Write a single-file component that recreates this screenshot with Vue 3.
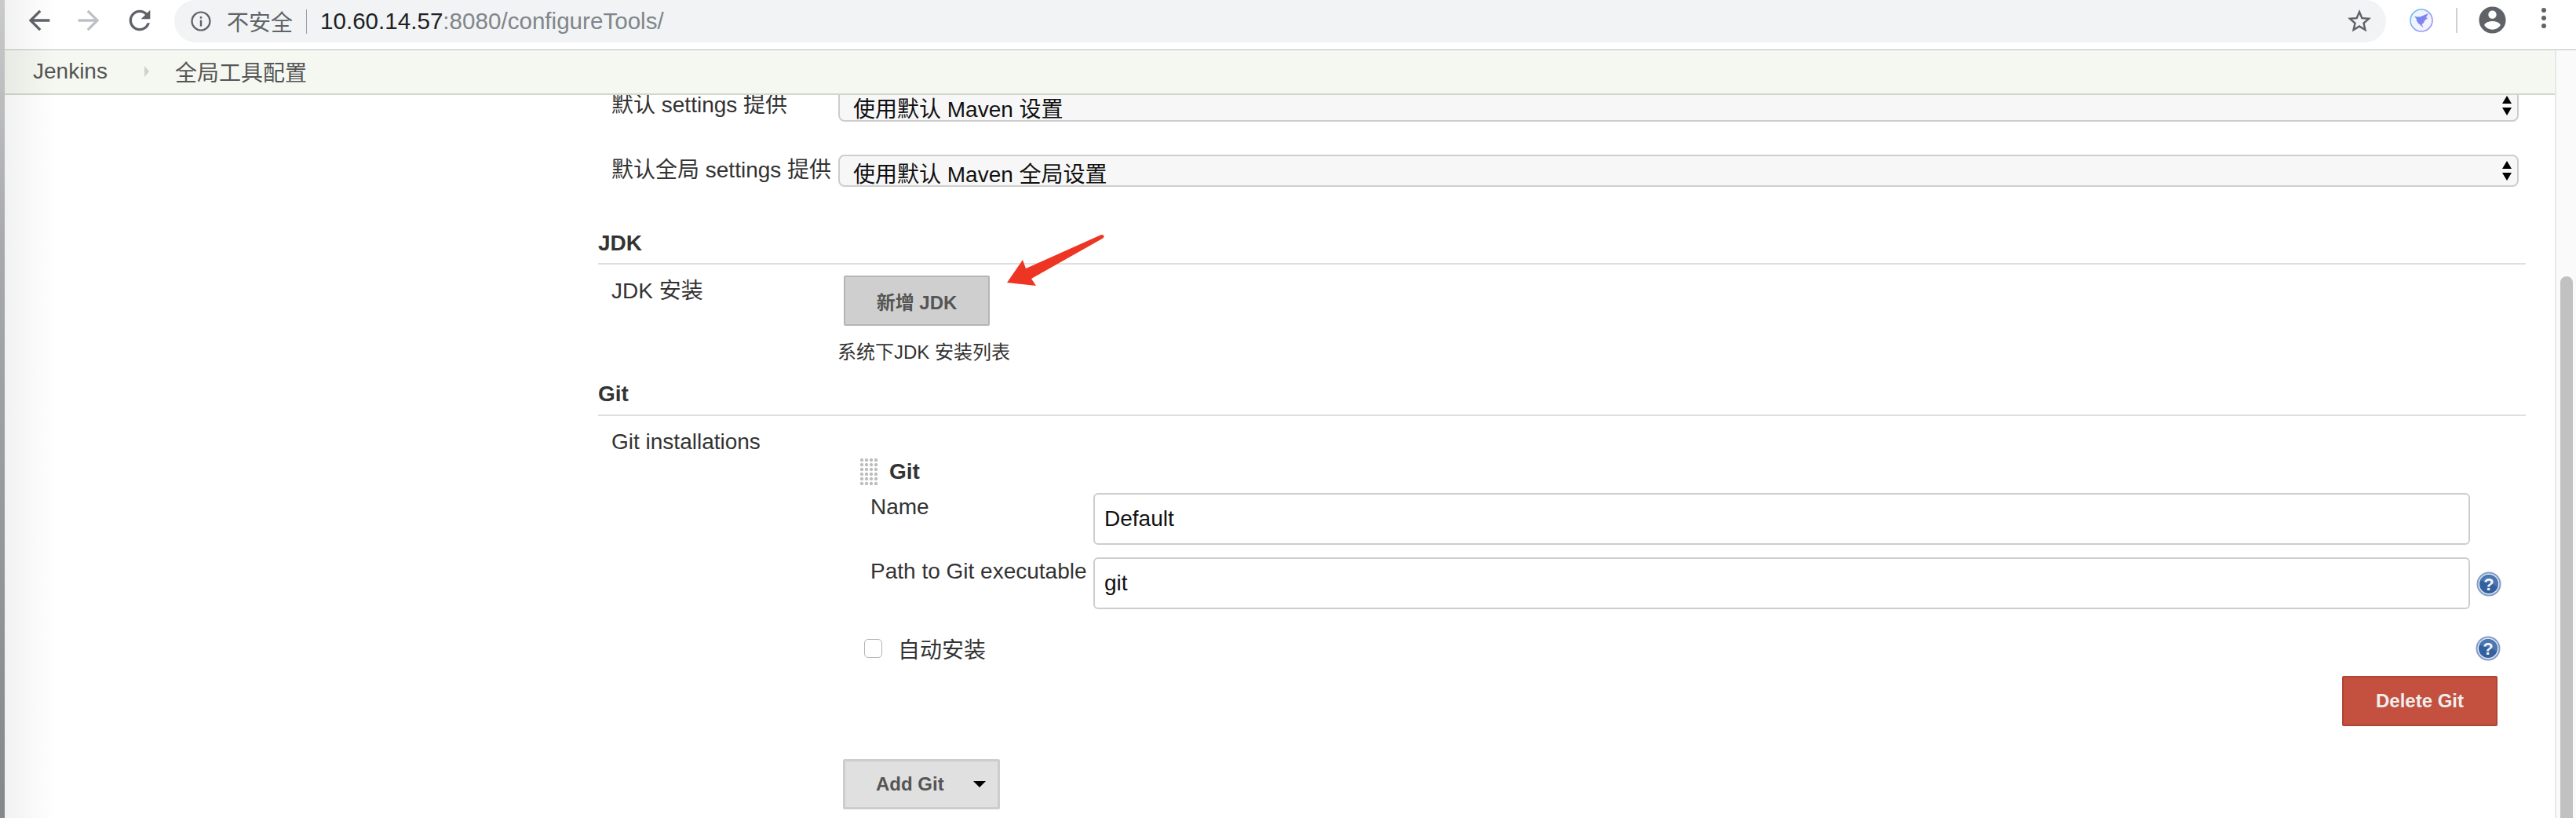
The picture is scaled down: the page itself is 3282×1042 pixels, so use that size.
<template>
  <div class="page">
    <div class="edge"></div>
    <div class="window">
      <div class="shade"></div>

      <header class="toolbar">
        <svg class="nav back" viewBox="0 0 24 24"><path d="M20 11H7.83l5.59-5.59L12 4l-8 8 8 8 1.41-1.41L7.83 13H20v-2z" /></svg>
        <svg class="nav forward" viewBox="0 0 24 24"><path d="M12 4l-1.41 1.41L16.17 11H4v2h12.17l-5.58 5.59L12 20l8-8z" /></svg>
        <svg class="nav reload" viewBox="0 0 24 24"><path d="M17.65 6.35A7.958 7.958 0 0 0 12 4c-4.42 0-7.99 3.58-7.99 8s3.57 8 7.99 8c3.73 0 6.84-2.55 7.73-6h-2.08A5.99 5.99 0 0 1 12 18c-3.31 0-6-2.69-6-6s2.69-6 6-6c1.66 0 3.14.69 4.22 1.78L13 11h7V4l-2.35 2.35z" /></svg>

        <div class="omnibox">
          <svg class="info" viewBox="0 0 26 26">
            <circle cx="13" cy="13" r="11.5" fill="none" stroke="#5f6368" stroke-width="2.2" />
            <rect x="11.8" y="11.5" width="2.4" height="8" fill="#5f6368" />
            <rect x="11.8" y="7" width="2.4" height="2.6" fill="#5f6368" />
          </svg>
          <span class="insecure">不安全</span>
          <span class="url-sep"></span>
          <span class="url"><b>10.60.14.57</b>:8080/configureTools/</span>
          <svg class="star" viewBox="0 0 24 24"><path d="M22 9.24l-7.19-.62L12 2 9.19 8.63 2 9.24l5.46 4.73L5.82 21 12 17.27 18.18 21l-1.63-7.03L22 9.24zM12 15.4l-3.76 2.27 1-4.28-3.32-2.88 4.38-.38L12 6.1l1.71 4.04 4.38.38-3.32 2.88 1 4.28L12 15.4z" /></svg>
        </div>

        <svg class="ext" viewBox="0 0 30 30">
          <defs>
            <linearGradient id="ring" x1="0" y1="0" x2="1" y2="1">
              <stop offset="0" stop-color="#5cc8f5" />
              <stop offset="1" stop-color="#a78bf5" />
            </linearGradient>
            <linearGradient id="bird" x1="0" y1="0" x2="1" y2="1">
              <stop offset="0" stop-color="#4f8df0" />
              <stop offset="1" stop-color="#b07cf0" />
            </linearGradient>
          </defs>
          <circle cx="15" cy="15" r="14" fill="#f1f3fe" stroke="url(#ring)" stroke-width="1.6" />
          <path d="M6 10l4 .5c2 .2 3 .2 4.5-.6L24 6l-3.2 5.6 2.7.2-4.3 3.4c-.8 2.600-1.800 3.800-3.700 4.600l2 4.700-4.500-4.200c-2.500-1.800-4.500-4.800-4.400-7.600z" fill="url(#bird)" />
        </svg>
        <span class="tool-sep"></span>
        <svg class="avatar" viewBox="0 0 24 24"><path d="M12 2C6.48 2 2 6.48 2 12s4.48 10 10 10 10-4.48 10-10S17.52 2 12 2zm0 3c1.660 0 3 1.340 3 3s-1.340 3-3 3-3-1.340-3-3 1.340-3 3-3zm0 14.200c-2.500 0-4.710-1.280-6-3.220.03-1.990 4-3.080 6-3.080 1.990 0 5.970 1.090 6 3.080-1.290 1.940-3.500 3.220-6 3.220z" /></svg>
        <div class="dots"><i></i><i></i><i></i></div>
      </header>

      <div class="viewport">
        <div class="column">
          <nav class="breadcrumb">
            <span>Jenkins</span>
            <span class="crumb-arrow"></span>
            <span>全局工具配置</span>
          </nav>

          <main class="form">
            <div class="select-row first">
              <label class="field-label">默认 settings 提供</label>
              <div class="select">
                <span>使用默认 Maven 设置</span>
                <span class="spinner"><i class="up"></i><i class="down"></i></span>
              </div>
            </div>
            <div class="select-row second">
              <label class="field-label">默认全局 settings 提供</label>
              <div class="select">
                <span>使用默认 Maven 全局设置</span>
                <span class="spinner"><i class="up"></i><i class="down"></i></span>
              </div>
            </div>

            <h2 class="section jdk">JDK</h2>
            <div class="install-row">
              <label class="field-label">JDK 安装</label>
              <div class="install-body">
                <button class="btn btn-pressed">新增 JDK</button>
                <p class="hint">系统下JDK 安装列表</p>
              </div>
            </div>

            <h2 class="section git">Git</h2>
            <div class="git-row">
              <label class="field-label">Git installations</label>
              <div class="git-body">
                <div class="git-head">
                  <span class="handle"></span>
                  <strong>Git</strong>
                </div>
                <div class="input-row name-row">
                  <label>Name</label>
                  <input class="text" value="Default" />
                </div>
                <div class="input-row path-row">
                  <label>Path to Git executable</label>
                  <input class="text" value="git" />
                  <span class="help">
                    <svg viewBox="0 0 32 32"><use href="#help-glyph" /></svg>
                  </span>
                </div>
                <div class="auto-row">
                  <span class="check"></span>
                  <span class="auto-label">自动安装</span>
                  <span class="help">
                    <svg viewBox="0 0 32 32">
                      <defs>
                        <g id="help-glyph">
                          <circle cx="16" cy="16" r="15.500" fill="#7f9cc6" />
                          <circle cx="16" cy="16" r="13.500" fill="#e3e9f3" />
                          <circle cx="16" cy="16" r="12" fill="#34609f" />
                          <path d="M16 4a12 12 0 0 1 11 16.500C22 15 12 13 5 11.500A12 12 0 0 1 16 4z" fill="#4c77b3" />
                          <text x="16" y="24" text-anchor="middle" class="help-mark">?</text>
                        </g>
                      </defs>
                      <use href="#help-glyph" />
                    </svg>
                  </span>
                </div>
                <div class="delete-row">
                  <button class="btn btn-delete">Delete Git</button>
                </div>
                <button class="btn btn-add">
                  <span>Add Git</span>
                  <i class="caret"></i>
                </button>
              </div>
            </div>
          </main>
        </div>

        <div class="scrollbar"><div class="thumb"></div></div>
      </div>

      <!-- annotation drawn on top of the screenshot -->
      <svg class="annotation" viewBox="0 0 130 70">
        <path d="M122 1.500c2-1.200 4.500-.3 4.500 1.500 0 1-.7 2-1.700 2.800L34 57l6 9-37-4L23 33l4 11z" fill="#ee3524" />
      </svg>
    </div>
  </div>
</template>

<script setup>
// static page, nothing to wire up
</script>

<style>
html, body { margin: 0; background: #fff; }
</style>

<style scoped>
.page {
  display: flex; width: 3282px; height: 1042px; overflow: hidden; background: #fff;
  font-family: "Liberation Sans", "Noto Sans CJK SC", sans-serif; font-size: 28px; color: #333;
}
.edge { width: 6px; flex-shrink: 0; background: linear-gradient(#c9cacc, #a7a9ac 30%, #84888b); }
.window { position: relative; flex: 1; min-width: 0; display: flex; flex-direction: column; }
.shade {
  position: absolute; left: 0; top: 0; bottom: 0; width: 64px; z-index: 3; pointer-events: none;
  background: linear-gradient(90deg, rgba(0,0,0,0.055), rgba(0,0,0,0));
}

.toolbar {
  height: 63px; flex-shrink: 0; display: flex; align-items: flex-start; position: relative; z-index: 2;
  background: #fff; border-bottom: 1px solid #bcbdbd; padding-right: 38px;
}
.nav { width: 40px; height: 40px; margin-top: 6px; fill: #5f6368; flex-shrink: 0; }
.back { margin-left: 24px; }
.forward { margin-left: 23px; fill: #bdc1c6; }
.reload { margin-left: 25px; }
.omnibox {
  flex: 1; height: 54px; margin-left: 24px; display: flex; align-items: center; min-width: 0;
  background: #f1f3f4; border-radius: 27px; padding: 0 16px 0 21px;
}
.info { width: 26px; height: 26px; flex-shrink: 0; }
.insecure { margin-left: 20px; font-size: 28px; color: #5f6368; }
.url-sep { width: 1px; height: 31px; background: #9aa0a6; margin: 0 17px 0 17px; }
.url { font-size: 29.600px; color: #80868b; }
.url b { font-weight: 400; color: #202124; }
.star { width: 36px; height: 36px; margin-left: auto; fill: #5f6368; }
.ext { width: 30px; height: 30px; margin: 11px 0 0 30px; flex-shrink: 0; }
.tool-sep { width: 2px; height: 32px; background: #d0d0d0; margin: 10px 0 0 29px; flex-shrink: 0; }
.avatar { width: 41px; height: 41px; margin: 5px 0 0 24px; fill: #5f6368; flex-shrink: 0; }
.dots { display: flex; flex-direction: column; gap: 4px; margin: 10px 0 0 42px; }
.dots i { width: 6px; height: 6px; border-radius: 50%; background: #5f6368; }

.viewport { flex: 1; min-height: 0; display: flex; }
.column { flex: 1; min-width: 0; display: flex; flex-direction: column; }
.breadcrumb {
  height: 53px; flex-shrink: 0; display: flex; align-items: center; position: relative; z-index: 1;
  background: #f5f8f1; border-bottom: 2px solid #d3d5cf; padding: 0 0 2px 36px; color: #555;
}
.crumb-arrow {
  width: 0; height: 0; margin: 0 33px 0 47px;
  border-left: 6px solid #cfd0cc; border-top: 7px solid transparent; border-bottom: 7px solid transparent;
}
.form { flex: 1; min-height: 0; overflow: hidden; padding-left: 756px; }

.select-row { display: flex; align-items: flex-start; }
.first { margin-top: -7px; }
.second { margin-top: 42px; }
.field-label { width: 289px; margin-left: 17px; flex-shrink: 0; line-height: 32px; white-space: nowrap; }
.first .field-label, .second .field-label { margin-top: 4px; }
.select {
  width: 2141px; height: 41px; box-sizing: border-box; display: flex; align-items: center;
  justify-content: space-between; padding: 4px 7px 0 17px; background: #f7f7f7; color: #111;
  border: 2px solid #cdcdcd; border-radius: 8px;
}
.spinner { display: flex; flex-direction: column; gap: 5px; margin-top: -4px; }
.spinner i { width: 0; height: 0; border-left: 6.5px solid transparent; border-right: 6.5px solid transparent; }
.spinner .up { border-bottom: 10px solid #000; }
.spinner .down { border-top: 10px solid #000; }

.section {
  width: 2456px; margin: 0; font-size: 28px; line-height: 32px; font-weight: 700; color: #333;
  border-bottom: 2px solid #dfdfdf;
}
.jdk { margin-top: 56px; padding-bottom: 9px; }
.git { margin-top: 0; padding-bottom: 10px; }
.install-row { display: flex; align-items: flex-start; height: 149px; }
.install-row .field-label { margin-top: 18px; width: 296px; }
.install-body { display: flex; flex-direction: column; align-items: flex-start; padding-top: 14px; }
.btn { font-family: inherit; font-size: 24px; font-weight: 700; box-sizing: border-box; border-radius: 2px; padding: 0; }
.btn-pressed { width: 186px; height: 64px; background: #cfcfcf; border: 2px solid #b5b5b5; color: #555; }
.hint { margin: 19px 0 0 -8px; font-size: 24px; line-height: 30px; color: #333; white-space: nowrap; }

.git-row { display: flex; align-items: flex-start; }
.git-row .field-label { margin-top: 17px; width: 316px; }
.git-body { width: 2088px; flex-shrink: 0; }
.git-head { display: flex; align-items: center; margin-top: 53px; height: 36px; }
.handle {
  width: 24px; height: 36px;
  background: radial-gradient(circle, #bdbdbd 1.6px, rgba(255,255,255,0) 2.6px) 0 0 / 6px 6px;
}
.git-head strong { margin-left: 14px; font-size: 28px; color: #333; }
.input-row { display: flex; align-items: flex-start; height: 66px; }
.input-row label { width: 284px; margin-left: 14px; flex-shrink: 0; line-height: 32px; white-space: nowrap; }
.name-row { margin-top: 9px; }
.name-row label { margin-top: 2px; }
.path-row { margin-top: 16px; }
.path-row label { margin-top: 2px; }
.text {
  width: 1754px; height: 66px; box-sizing: border-box; flex-shrink: 0; padding: 0 12px; outline: none;
  font-family: inherit; font-size: 28px; color: #111; background: #fff;
  border: 2px solid #cdcdcd; border-radius: 6px;
}
.help { width: 32px; height: 32px; flex-shrink: 0; margin-left: 8px; margin-top: 18px; }
.help svg { display: block; width: 32px; height: 32px; }
.help-mark { font: 700 22px "Liberation Sans", sans-serif; fill: #f2f5fa; }
.auto-row { display: flex; align-items: center; height: 32px; margin-top: 34px; }
.check {
  width: 23px; height: 24px; box-sizing: border-box; margin-left: 6px; flex-shrink: 0; background: #fff;
  border: 1.5px solid #b4b4b4; border-radius: 5px;
}
.auto-label { margin-left: 20px; color: #333; }
.auto-row .help { margin: 0 -3px 0 auto; }
.delete-row { display: flex; justify-content: flex-end; margin-top: 19px; }
.btn-delete { width: 198px; height: 64px; background: #c4513f; border: 2px solid #b14433; color: #eee; margin-right: 1px; }
.btn-add {
  width: 200px; height: 64px; margin: 42px 0 0 -21px; display: flex; align-items: center;
  background: #e0e0e0; border: 3px solid #cdcdcd; color: #555; padding-left: 39px;
}
.caret { width: 0; height: 0; margin-left: 37px; border-left: 8px solid transparent; border-right: 8px solid transparent; border-top: 8px solid #000; }

.scrollbar {
  width: 27px; flex-shrink: 0; box-sizing: border-box; background: #fafafa;
  border-left: 2px solid #e8e8e8; padding: 288px 4px 0 5px; overflow: hidden;
}
.thumb { height: 800px; background: #c1c1c1; border-radius: 8px; }

.annotation { position: absolute; left: 1274px; top: 298px; width: 130px; height: 70px; z-index: 4; pointer-events: none; }
</style>
